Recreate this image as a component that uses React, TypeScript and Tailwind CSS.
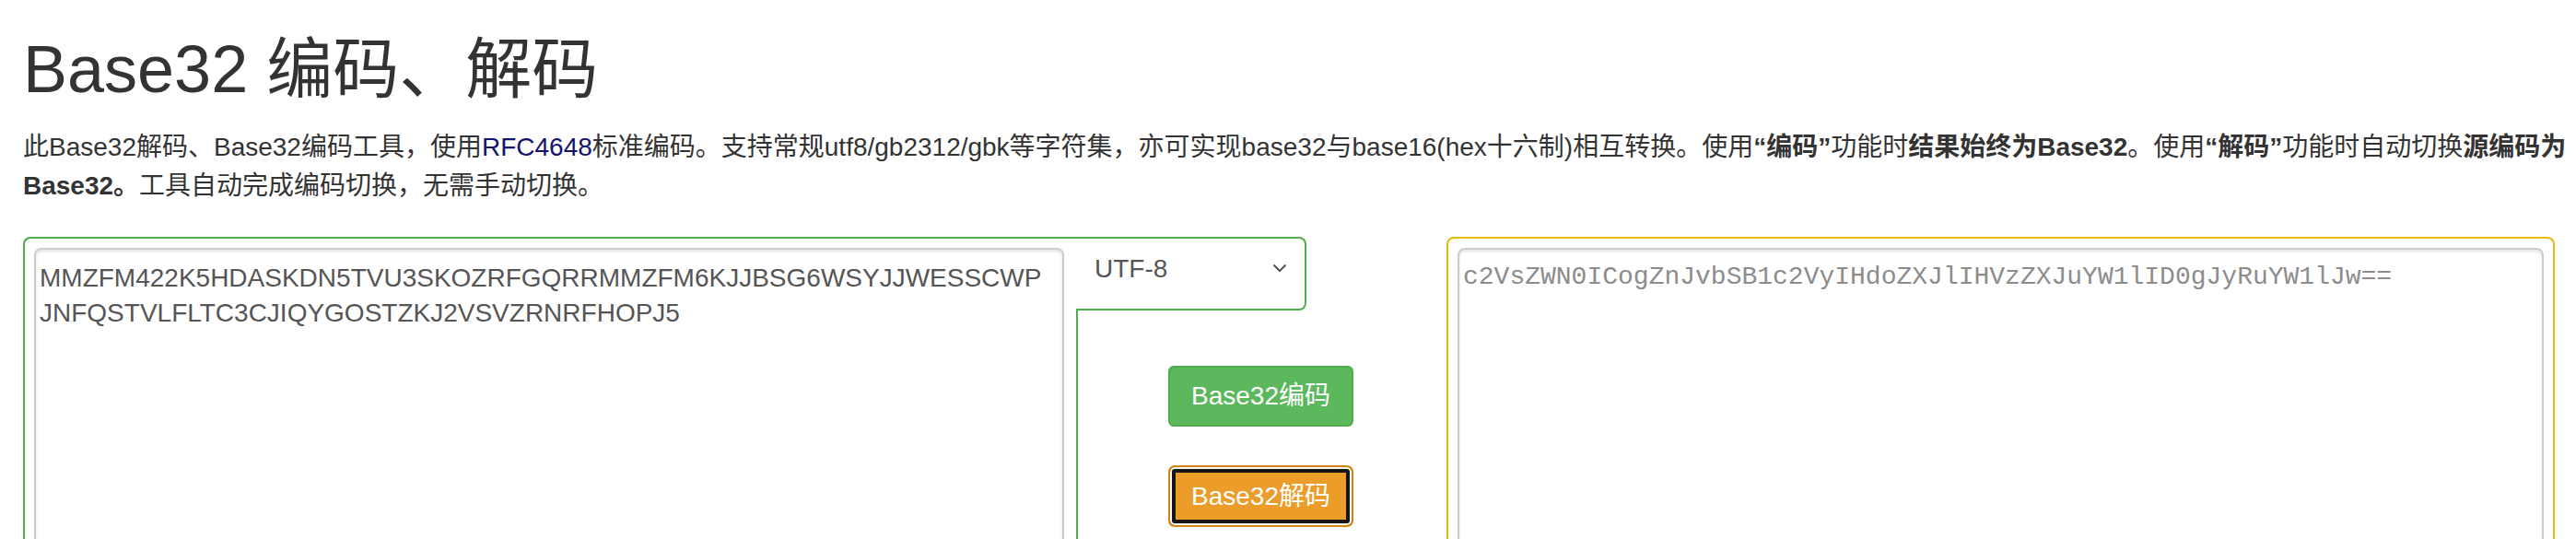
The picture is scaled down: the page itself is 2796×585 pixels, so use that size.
import React from "react";

const sans = "font-['Liberation_Sans','Noto_Sans_CJK_SC',sans-serif]";

const encoded =
  "MMZFM422K5HDASKDN5TVU3SKOZRFGQRRMMZFM6KJJBSG6WSYJJWESSCWP\nJNFQSTVLFLTC3CJIQYGOSTZKJ2VSVZRNRFHOPJ5";

const Chevron = () => (
  <svg width="16" height="10" viewBox="0 0 16 10" fill="none">
    <path d="M1.5 1.5L8 8L14.5 1.5" stroke="#555" strokeWidth="2" />
  </svg>
);

export default function App() {
  return (
    <div className={`${sans} text-[#333] pl-[25px] pt-[36px] w-[2796px] overflow-hidden`}>
      <h1 className="text-[72px] leading-[79px] font-normal mb-[24px]">Base32 编码、解码</h1>

      <div className="text-[28px] leading-[42px]">
        <div className="whitespace-nowrap">
          此Base32解码、Base32编码工具，使用<span className="text-[#14146e]">RFC4648</span>
          标准编码。支持常规utf8/gb2312/gbk等字符集，亦可实现base32与base16(hex十六制)相互转换。使用
          <b>“编码”</b>功能时<b>结果始终为Base32</b>。使用<b>“解码”</b>功能时自动切换
          <b>源编码为</b>
        </div>
        <div className="whitespace-nowrap">
          <b>Base32。</b>工具自动完成编码切换，无需手动切换。
        </div>
      </div>

      <div className="flex items-start mt-[34px]">
        {/* input side */}
        <div className="w-[1143px] border-l-2 border-t-2 border-[#4cae4c] rounded-tl-[8px] pl-[10px] pt-[10px] pr-[13px]">
          <textarea
            readOnly
            value={encoded}
            className={`${sans} block w-[1118px] h-[420px] resize-none border-2 border-[#ccc] rounded-[8px] px-[4px] pt-[12px] text-[28px] leading-[38px] text-[#555] bg-white shadow-[inset_0_2px_3px_rgba(0,0,0,0.12)] outline-none`}
          />
        </div>

        <div className="w-[250px] flex flex-col">
          <div className="h-[80px] border-t-2 border-r-2 border-b-2 border-[#4cae4c] rounded-r-[8px] flex items-start justify-between pl-[20px] pr-[19px] pt-[17px]">
            <span className="text-[28px] leading-[32px] text-[#555]">UTF-8</span>
            <span className="pt-[10px]">
              <Chevron />
            </span>
          </div>
          <div className="h-[300px] border-l-2 border-[#4cae4c] pl-[98px] pt-[60px] flex flex-col gap-[42px]">
            <button className="w-[201px] h-[66px] shrink-0 rounded-[6px] bg-[#5cb85c] border-2 border-[#4cae4c] text-white text-[28px] leading-[32px]">
              Base32编码
            </button>
            <button className="w-[201px] h-[67px] shrink-0 rounded-[7px] bg-[#ec9c29] border-2 border-[#d58512] text-white text-[28px] leading-[32px] shadow-[inset_0_0_0_2px_#fff,inset_0_0_0_6px_#151515]">
              Base32解码
            </button>
          </div>
        </div>

        {/* output side */}
        <div className="ml-[152px] w-[1203px] border-2 border-[#e9b80a] rounded-[8px] p-[10px]">
          <textarea
            readOnly
            placeholder="c2VsZWN0ICogZnJvbSB1c2VyIHdoZXJlIHVzZXJuYW1lID0gJyRuYW1lJw=="
            className="block w-full h-[420px] resize-none border-2 border-[#ccc] rounded-[8px] px-[4px] pt-[11px] font-['Liberation_Mono',monospace] text-[28px] leading-[38px] text-[#555] placeholder:text-[#8c8c8c] bg-white shadow-[inset_0_2px_3px_rgba(0,0,0,0.12)] outline-none"
          />
        </div>
      </div>
    </div>
  );
}
